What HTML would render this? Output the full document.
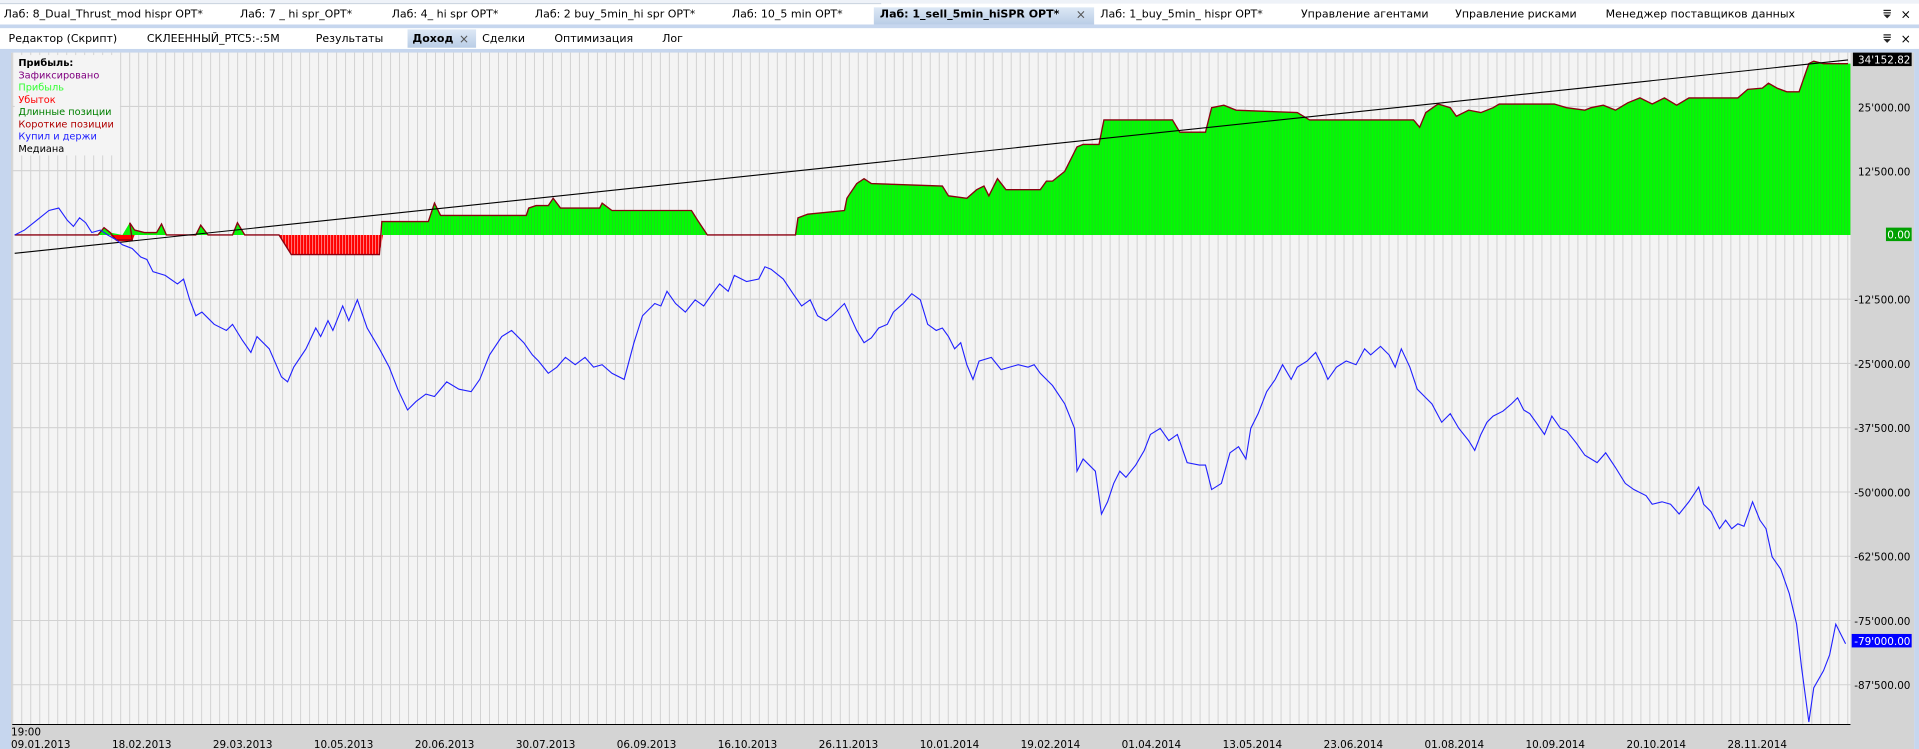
<!DOCTYPE html>
<html><head><meta charset="utf-8"><style>
html,body{margin:0;padding:0;background:#fff;overflow:hidden}
svg{display:block}
text{font-family:"DejaVu Sans","Liberation Sans",sans-serif;}
</style></head><body>
<svg width="1919" height="749" viewBox="0 0 1568 612" preserveAspectRatio="none" xmlns="http://www.w3.org/2000/svg">
<defs>
<pattern id="vg" patternUnits="userSpaceOnUse" x="10" y="0" width="7.35" height="10"><rect width="7.35" height="10" fill="#f4f4f4"/><rect x="0" width="0.8" height="10" fill="#d2d2d2"/></pattern>
<pattern id="gp" patternUnits="userSpaceOnUse" x="10" y="0" width="2.45" height="10"><rect width="2.45" height="10" fill="#00ff00"/><rect x="0" width="0.7" height="10" fill="#22d022"/></pattern>
<pattern id="rp" patternUnits="userSpaceOnUse" x="10" y="0" width="2.45" height="10"><rect width="2.45" height="10" fill="#ff0000"/><rect x="0" width="0.7" height="10" fill="#ff9090"/></pattern>
<linearGradient id="tab" x1="0" y1="0" x2="0" y2="1"><stop offset="0" stop-color="#dde8f5"/><stop offset="1" stop-color="#b9cde6"/></linearGradient>
</defs>
<rect width="1568" height="612" fill="#fff"/>
<rect x="0" y="0" width="1568" height="3" fill="#eef2f8"/>
<line x1="0" y1="3" x2="720" y2="3" stroke="#c8d2de" stroke-width="0.8"/>
<rect x="714" y="6" width="180" height="14" fill="url(#tab)"/>
<rect x="0" y="20" width="1568" height="3" fill="#c6d6ee"/>
<g font-size="9" fill="#000">
<text x="3" y="14.5">Лаб: 8_Dual_Thrust_mod hispr OPT*</text>
<text x="196" y="14.5">Лаб: 7 _ hi spr_OPT*</text>
<text x="320" y="14.5">Лаб: 4_ hi spr OPT*</text>
<text x="437" y="14.5">Лаб: 2 buy_5min_hi spr OPT*</text>
<text x="598" y="14.5">Лаб: 10_5 min OPT*</text>
<text x="719" y="14.5" font-weight="bold">Лаб: 1_sell_5min_hiSPR OPT*</text>
<text x="879" y="15" font-size="10" fill="#555">×</text>
<text x="899" y="14.5">Лаб: 1_buy_5min_ hispr OPT*</text>
<text x="1063" y="14.5">Управление агентами</text>
<text x="1189" y="14.5">Управление рисками</text>
<text x="1312" y="14.5">Менеджер поставщиков данных</text>
<text x="1553" y="15" font-size="10">×</text>
</g>
<g fill="#222"><rect x="1539" y="8" width="6" height="1"/><rect x="1539" y="10" width="6" height="1"/><polygon points="1539,12 1545,12 1542,15"/></g>
<rect x="333" y="24" width="56" height="15" fill="url(#tab)"/>
<g font-size="9" fill="#000">
<text x="7" y="34.5">Редактор (Скрипт)</text>
<text x="120" y="34.5">СКЛЕЕННЫЙ_PTC5:-:5M</text>
<text x="258" y="34.5">Результаты</text>
<text x="337" y="34.5" font-weight="bold">Доход</text>
<text x="375" y="35" font-size="10" fill="#555">×</text>
<text x="394" y="34.5">Сделки</text>
<text x="453" y="34.5">Оптимизация</text>
<text x="541" y="34.5">Лог</text>
<text x="1553" y="35" font-size="10">×</text>
</g>
<g fill="#222"><rect x="1539" y="28" width="6" height="1"/><rect x="1539" y="30" width="6" height="1"/><polygon points="1539,32 1545,32 1542,35"/></g>
<rect x="0" y="40" width="1568" height="3" fill="#c6d6ee"/>
<rect x="0" y="40" width="9" height="572" fill="#c6d6ee"/>
<rect x="1564" y="40" width="4" height="572" fill="#c6d6ee"/>
<rect x="9" y="43" width="1555" height="569" fill="#d4d4d4"/>
<rect x="10" y="43" width="1502" height="549" fill="url(#vg)"/>
<g stroke="#d2d2d2" stroke-width="0.9">
<line x1="10" y1="87" x2="1512" y2="87"/><line x1="10" y1="139.5" x2="1512" y2="139.5"/>
<line x1="10" y1="244.5" x2="1512" y2="244.5"/><line x1="10" y1="297" x2="1512" y2="297"/>
<line x1="10" y1="349.5" x2="1512" y2="349.5"/><line x1="10" y1="402" x2="1512" y2="402"/>
<line x1="10" y1="454.5" x2="1512" y2="454.5"/><line x1="10" y1="507" x2="1512" y2="507"/>
<line x1="10" y1="559.5" x2="1512" y2="559.5"/>
</g>
<line x1="10" y1="592" x2="1512" y2="592" stroke="#000" stroke-width="0.8"/>
<polygon points="228,192 238,208 310,208 313,192" fill="url(#rp)"/>
<polygon points="90,192 95,197 108,197 110,192" fill="#ff0000"/>
<path fill="url(#gp)" d="M12,192 L80,192 85,186 90,190 100,192 106,182 110,188 118,190 128,190 132,183 136,192 160,192 164,184 170,192 190,192 194,182 200,192 312,192 312,181 350,181 355,166 360,176 430,176 432,170 438,168 448,168 452,162 458,170 490,170 492,166 500,172 565,172 570,180 578,192 650,192 652,178 660,175 690,172 692,162 700,150 706,146 712,150 770,152 775,160 790,162 798,155 804,152 808,160 815,146 822,155 850,155 855,148 860,148 870,140 880,120 885,118 898,118 902,98 958,98 964,108 985,108 990,88 1000,86 1010,90 1060,92 1070,98 1155,98 1160,104 1165,92 1175,85 1185,88 1190,95 1200,90 1210,92 1220,88 1225,85 1270,85 1280,88 1295,90 1300,88 1310,86 1320,90 1330,84 1340,80 1350,85 1360,80 1370,86 1380,80 1420,80 1428,73 1440,72 1445,68 1452,72 1460,75 1470,75 1478,52 1482,50 1490,52 1512,52 1512,192 Z"/>
<polyline fill="none" stroke="#8b0010" stroke-width="1.1" points="12,192 80,192 85,186 90,190 95,196 108,196 106,182 110,188 118,190 128,190 132,183 136,192 160,192 164,184 170,192 190,192 194,182 200,192 228,192 238,208 310,208 312,181 350,181 355,166 360,176 430,176 432,170 438,168 448,168 452,162 458,170 490,170 492,166 500,172 565,172 570,180 578,192 650,192 652,178 660,175 690,172 692,162 700,150 706,146 712,150 770,152 775,160 790,162 798,155 804,152 808,160 815,146 822,155 850,155 855,148 860,148 870,140 880,120 885,118 898,118 902,98 958,98 964,108 985,108 990,88 1000,86 1010,90 1060,92 1070,98 1155,98 1160,104 1165,92 1175,85 1185,88 1190,95 1200,90 1210,92 1220,88 1225,85 1270,85 1280,88 1295,90 1300,88 1310,86 1320,90 1330,84 1340,80 1350,85 1360,80 1370,86 1380,80 1420,80 1428,73 1440,72 1445,68 1452,72 1460,75 1470,75 1478,52 1482,50 1490,52 1510,52"/>
<line x1="12" y1="207" x2="1510" y2="49" stroke="#000" stroke-width="0.9"/>
<polyline fill="none" stroke="#2020ff" stroke-width="0.9" points="12,192 20,188 30,180 40,172 48,170 55,180 60,185 65,178 70,182 75,190 82,188 88,192 95,196 100,200 108,203 115,210 120,212 125,222 135,225 145,232 150,228 155,245 160,258 165,255 175,265 185,270 190,265 198,278 205,288 210,275 220,285 230,308 235,312 240,300 250,285 258,268 262,275 268,262 272,270 280,250 285,262 292,245 300,268 310,285 318,300 325,318 333,335 340,328 348,322 355,324 365,312 375,318 385,320 392,310 400,290 410,275 418,270 428,280 435,290 440,295 448,305 455,300 462,292 470,298 478,292 485,300 492,298 500,305 510,310 518,280 525,258 535,248 540,250 545,238 552,248 560,255 568,245 575,250 582,240 588,232 595,238 600,225 610,230 620,228 625,218 630,220 640,228 648,240 655,250 662,245 668,258 675,262 680,258 690,248 700,270 706,280 712,276 718,268 725,265 730,255 738,248 745,240 752,245 758,265 765,270 770,268 775,275 780,285 785,280 790,298 795,310 800,295 810,292 818,302 825,300 832,298 840,300 845,298 850,305 860,315 870,330 878,350 880,385 885,375 895,385 900,420 905,410 910,395 915,385 920,390 928,380 935,368 940,355 948,350 955,360 962,355 970,378 980,380 985,380 990,400 998,395 1005,370 1012,365 1018,375 1022,350 1028,338 1035,320 1042,310 1048,298 1055,310 1060,300 1068,295 1075,288 1080,298 1085,310 1092,300 1100,295 1108,298 1115,285 1120,290 1128,283 1135,290 1140,300 1145,285 1152,300 1158,318 1165,325 1170,330 1178,345 1185,338 1192,350 1200,360 1205,368 1210,355 1215,345 1220,340 1228,336 1235,330 1240,325 1245,335 1250,338 1255,345 1262,355 1268,340 1275,350 1280,352 1288,362 1295,372 1305,378 1312,370 1320,382 1328,395 1335,400 1345,405 1350,412 1358,410 1365,412 1372,420 1380,410 1388,398 1392,412 1398,418 1405,432 1410,425 1415,432 1420,428 1425,430 1432,410 1438,425 1443,432 1448,455 1455,465 1462,485 1468,510 1472,545 1478,590 1482,562 1490,548 1495,535 1500,510 1505,520 1508,526"/>
<rect x="12" y="45" width="86" height="82" fill="#f4f4f4"/>
<g font-size="8">
<text x="15" y="54" font-weight="bold" fill="#000">Прибыль:</text>
<text x="15" y="64" fill="#800080">Зафиксировано</text>
<text x="15" y="74" fill="#33ff33">Прибыль</text>
<text x="15" y="84" fill="#ff0000">Убыток</text>
<text x="15" y="94" fill="#008000">Длинные позиции</text>
<text x="15" y="104" fill="#b00000">Короткие позиции</text>
<text x="15" y="114" fill="#2020ff">Купил и держи</text>
<text x="15" y="124" fill="#000">Медиана</text>
</g>
<g font-size="8.5" text-anchor="end" fill="#000">
<rect x="1514" y="43" width="48" height="11" fill="#000"/>
<text x="1561" y="52" fill="#fff">34'152.82</text>
<text x="1561" y="91">25'000.00</text>
<text x="1561" y="143.5">12'500.00</text>
<rect x="1541" y="186" width="21" height="11" fill="#00a000"/>
<text x="1561" y="195" fill="#fff">0.00</text>
<text x="1561" y="248">-12'500.00</text>
<text x="1561" y="300.5">-25'000.00</text>
<text x="1561" y="353">-37'500.00</text>
<text x="1561" y="405.5">-50'000.00</text>
<text x="1561" y="458">-62'500.00</text>
<text x="1561" y="510.5">-75'000.00</text>
<rect x="1513" y="518" width="49" height="11" fill="#0000ff"/>
<text x="1561" y="527" fill="#fff">-79'000.00</text>
<text x="1561" y="563">-87'500.00</text>
</g>
<g font-size="8.5" fill="#000">
<text x="9" y="601">19:00</text>
<text x="9" y="611">09.01.2013</text>
<text x="91.5" y="611">18.02.2013</text>
<text x="174" y="611">29.03.2013</text>
<text x="256.5" y="611">10.05.2013</text>
<text x="339" y="611">20.06.2013</text>
<text x="421.5" y="611">30.07.2013</text>
<text x="504" y="611">06.09.2013</text>
<text x="586.5" y="611">16.10.2013</text>
<text x="669" y="611">26.11.2013</text>
<text x="751.5" y="611">10.01.2014</text>
<text x="834" y="611">19.02.2014</text>
<text x="916.5" y="611">01.04.2014</text>
<text x="999" y="611">13.05.2014</text>
<text x="1081.5" y="611">23.06.2014</text>
<text x="1164" y="611">01.08.2014</text>
<text x="1246.5" y="611">10.09.2014</text>
<text x="1329" y="611">20.10.2014</text>
<text x="1411.5" y="611">28.11.2014</text>
</g>
</svg>
</body></html>
